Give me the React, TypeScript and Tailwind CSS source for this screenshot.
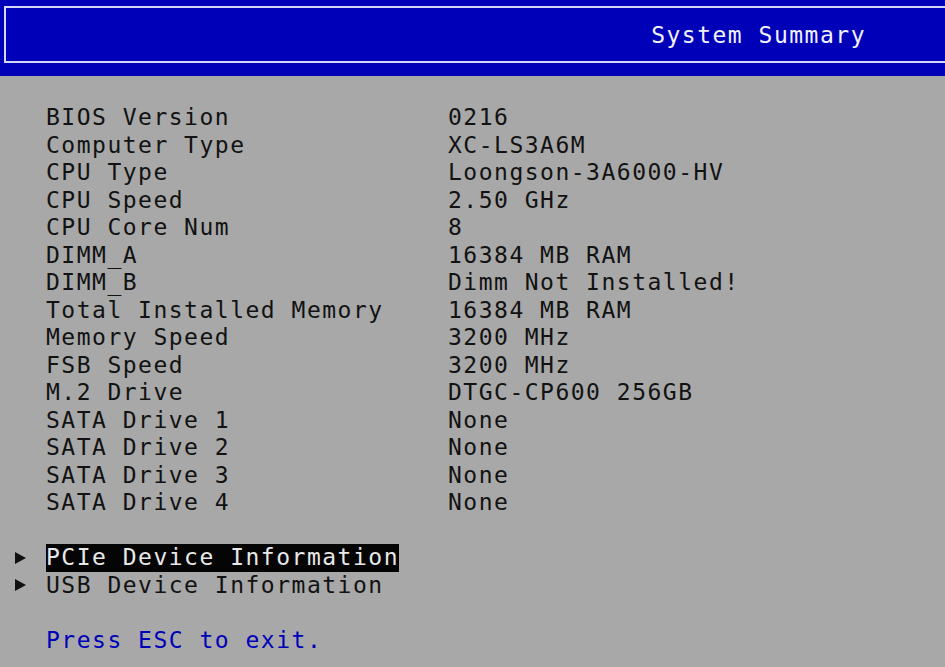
const ROWS: [string, string][] = [
  ["BIOS Version", "0216"],
  ["Computer Type", "XC-LS3A6M"],
  ["CPU Type", "Loongson-3A6000-HV"],
  ["CPU Speed", "2.50 GHz"],
  ["CPU Core Num", "8"],
  ["DIMM_A", "16384 MB RAM"],
  ["DIMM_B", "Dimm Not Installed!"],
  ["Total Installed Memory", "16384 MB RAM"],
  ["Memory Speed", "3200 MHz"],
  ["FSB Speed", "3200 MHz"],
  ["M.2 Drive", "DTGC-CP600 256GB"],
  ["SATA Drive 1", "None"],
  ["SATA Drive 2", "None"],
  ["SATA Drive 3", "None"],
  ["SATA Drive 4", "None"],
];

const MENU = [
  { label: "PCIe Device Information", active: true },
  { label: "USB Device Information", active: false },
];

export default function App() {
  return (
    <div
      className="flex h-[667px] w-[945px] flex-col overflow-hidden bg-[#a8a8a8] text-[23px] tracking-[1.5px] text-[#121212]"
      style={{ fontFamily: '"DejaVu Sans Mono", "Liberation Mono", monospace' }}
    >
      {/* title bar */}
      <header className="h-[76px] shrink-0 bg-[#0000b8] pl-[4px] pt-[6px]">
        <div className="flex h-[57px] items-center justify-end border-y-2 border-l-2 border-[#d6d6f6] pr-[79px] pt-[2px] text-[#f2f2ff]">
          System Summary
        </div>
      </header>

      {/* summary body */}
      <main className="flex flex-col pt-[28px] leading-[27.5px]">
        {ROWS.map(([label, value]) => (
          <div key={label} className="flex pl-[46px]">
            <span className="w-[402px] shrink-0 whitespace-pre">{label}</span>
            <span className="whitespace-pre">{value}</span>
          </div>
        ))}

        <div className="h-[27.5px]" />

        {MENU.map((m) => (
          <div key={m.label} className="flex items-center pl-[15px]">
            <span className="flex w-[31px] shrink-0 items-center">
              <span className="h-0 w-0 border-y-[6px] border-l-[11px] border-y-transparent border-l-[#101010]" />
            </span>
            <span
              className={
                m.active
                  ? "whitespace-pre bg-[#050505] text-[#e8e8e8]"
                  : "whitespace-pre"
              }
            >
              {m.label}
            </span>
          </div>
        ))}

        <div className="h-[27.5px]" />

        <div className="pl-[46px] text-[#0000b8]">Press ESC to exit.</div>
      </main>
    </div>
  );
}
